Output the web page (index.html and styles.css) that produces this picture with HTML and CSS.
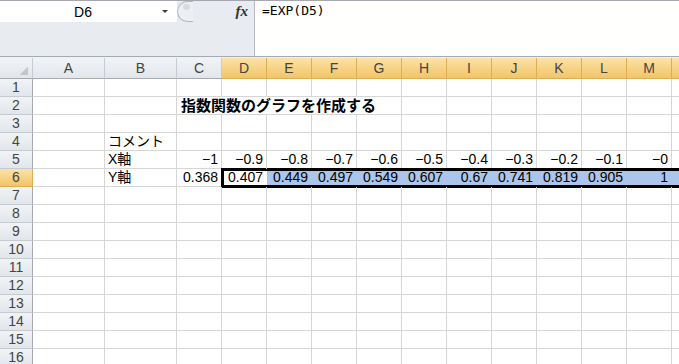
FILE: index.html
```html
<!DOCTYPE html>
<html lang="ja">
<head>
  <meta charset="UTF-8" />
  <meta name="viewport" content="width=device-width, initial-scale=1.0"/>
  <title>指数関数のグラフを作成する - Excel</title>
  <link rel="stylesheet" href="styles.css">
</head>
<body>

  <div class="formula-bar">
    <div class="name-panel">
      <div class="name-row">
        <div class="name-box">
          <span class="cell-ref">D6</span>
          <span class="drop"></span>
        </div>
        <div class="fx-box">
          <span class="grip"><span class="grip-dot"></span></span>
          <span class="fx">fx</span>
        </div>
      </div>
    </div>
    <div class="formula">=EXP(D5)</div>
  </div>

  <div class="sheet" id="sheet"></div>

  <script>
    const cols = ['A','B','C','D','E','F','G','H','I','J','K','L','M','N'];
    const selCols = 'DEFGHIJKLMN';
    const selRow = 6;
    const rowCount = 16;

    // cell contents, keyed by row then column
    const data = {
      2: { C: { text: '指数関数のグラフを作成する', cls: 'title', span: 5 } },
      4: { B: 'コメント' },
      5: { B: 'X軸', C: '−1', D: '−0.9', E: '−0.8', F: '−0.7', G: '−0.6', H: '−0.5',
           I: '−0.4', J: '−0.3', K: '−0.2', L: '−0.1', M: '−0' },
      6: { B: 'Y軸', C: '0.368', D: '0.407', E: '0.449', F: '0.497', G: '0.549', H: '0.607',
           I: '0.67', J: '0.741', K: '0.819', L: '0.905', M: '1' }
    };

    const sheet = document.getElementById('sheet');

    function add(cls, text, span) {
      const el = document.createElement('div');
      el.className = cls;
      if (text) el.textContent = text;
      if (span) el.style.gridColumn = 'span ' + span;
      sheet.appendChild(el);
      return el;
    }

    // header row
    add('hd corner');
    cols.forEach(c => add('hd col' + (selCols.includes(c) ? ' sel' : ''), c));

    for (let r = 1; r <= rowCount; r++) {
      add('hd row' + (r === selRow ? ' sel' : ''), String(r));
      const row = data[r] || {};
      for (let i = 0; i < cols.length; i++) {
        const c = cols[i];
        const v = row[c];
        let cls = 'cell';
        if (r === selRow && selCols.includes(c)) cls += (c === 'D' ? ' active' : ' picked');
        if (v && typeof v === 'object') {
          add(cls + ' ' + v.cls, v.text, v.span);
          i += v.span - 1;
          continue;
        }
        if (v && /^[−\d]/.test(v)) cls += ' num';
        add(cls, v);
      }
    }
  </script>

</body>
</html>
```

FILE: styles.css
```css
* {
  box-sizing: border-box;
}
body {
  margin: 0;
  width: 679px;
  height: 364px;
  overflow: hidden;
  background: #fff;
  font-family: "Liberation Sans", "Noto Sans CJK JP", sans-serif;
  color: #000;
}

/* formula bar */
.formula-bar {
  display: flex;
  height: 57px;
  border-top: 1px solid #a4a7ae;
  border-bottom: 1px solid #a3abb3;
}
.name-panel {
  width: 255px;
  flex: none;
  background: #e8ebef;
  border-right: 1px solid #b7bcc2;
}
.name-row {
  display: flex;
  height: 21px;
}
.name-box {
  width: 177px;
  background: #fff;
  display: flex;
  align-items: center;
}
.cell-ref {
  flex: 1;
  text-align: center;
  font-size: 14px;
  padding-left: 4px;
}
.drop {
  width: 0;
  height: 0;
  border-left: 3px solid transparent;
  border-right: 3px solid transparent;
  border-top: 3px solid #3c3c3c;
  margin-right: 9px;
}
.fx-box {
  flex: 1;
  display: flex;
  align-items: center;
  justify-content: space-between;
}
.grip {
  width: 16px;
  height: 21px;
  border: 1px solid #b3b8bf;
  border-right: none;
  border-radius: 11px 0 0 11px;
  background: #eceff3;
  padding: 2px 0 0 5px;
}
.grip-dot {
  display: block;
  width: 7px;
  height: 6px;
  border-radius: 50%;
  background: #d6dbe1;
}
.fx {
  font-family: "Liberation Serif", serif;
  font-style: italic;
  font-weight: bold;
  font-size: 15px;
  color: #333;
  margin-right: 6px;
}
.formula {
  flex: 1;
  background: #fffffd;
  font-family: "DejaVu Sans Mono", monospace;
  font-size: 13px;
  padding: 2px 0 0 7px;
}

/* worksheet */
.sheet {
  display: grid;
  grid-template-columns: 33px 72px 72px repeat(12, 45px);
  grid-template-rows: 21px;
  grid-auto-rows: 18px;
  width: 717px;
  border-top: 1px solid #eef0f3;
}
.hd {
  background: linear-gradient(#f1f3f6, #e2e6eb);
  border-right: 1px solid #c6cbd1;
  border-bottom: 1px solid #c6cbd1;
  color: #444;
  font-size: 14px;
  text-align: center;
  line-height: 17px;
}
.hd.col {
  border-bottom-color: #a6abb2;
  line-height: 21px;
}
.hd.row {
  border-right-color: #a6abb2;
}
.hd.sel {
  background: linear-gradient(#fbe2a8, #f3c466);
  border-color: #dcb052;
}
.corner {
  border-bottom-color: #a6abb2;
  background:
    linear-gradient(135deg, transparent 50%, #c3c7cc 50%) right 4px bottom 3px / 9px 9px no-repeat,
    linear-gradient(#f1f3f6, #e2e6eb);
}
.cell {
  border-right: 1px solid #d6d6d6;
  border-bottom: 1px solid #d6d6d6;
  font-size: 14px;
  line-height: 17px;
  padding: 0 3px;
  white-space: nowrap;
}
.num {
  text-align: right;
}
.title {
  font-weight: bold;
  font-size: 15px;
  padding-left: 4px;
  background: #fff;
}

/* selected range D6:N6, thick outline drawn with shadows */
.picked,
.active {
  border-right: none;
  border-bottom-color: #000;
  padding-right: 4px;
}
.picked {
  background: #abc6ea;
  box-shadow:
    inset 0 2px 0 #000,
    inset 0 -1px 0 #000,
    0 -1px 0 #000,
    0 1px 0 #000;
}
.active {
  background: #fff;
  box-shadow:
    inset 2px 2px 0 #000,
    inset 0 -1px 0 #000,
    -1px -1px 0 #000,
    -1px 1px 0 #000;
}
```
